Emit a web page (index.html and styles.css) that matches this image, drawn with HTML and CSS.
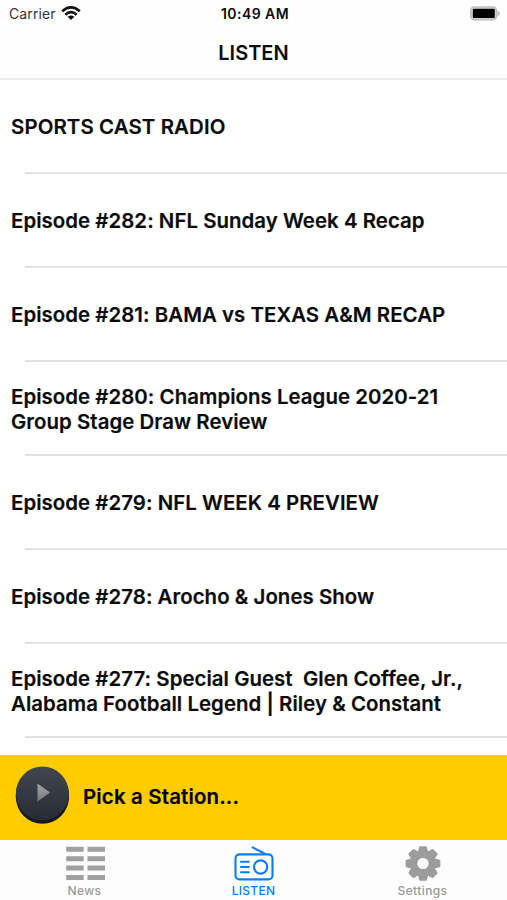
FILE: index.html
```html
<!DOCTYPE html>
<html lang="en">
<head>
<meta charset="utf-8">
<title>Listen</title>
<link rel="stylesheet" href="styles.css">
</head>
<body>
<div class="app">
  <header class="header">
    <div class="status">
      <div class="carrier"><span>Carrier</span>
        <svg class="wifi" width="20" height="15" viewBox="0 0 20 15"><g fill="none" stroke="#111" stroke-width="2.7"><path d="M1.2 5.2Q10-2.4 18.8 5.2"/><path d="M4.3 8.7Q10 3.6 15.7 8.7"/></g><path fill="#111" d="M6.7 10.8Q10 8 13.3 10.8L10 14Z"/></svg>
      </div>
      <span class="time">10:49 AM</span>
      <div class="power"><svg width="32" height="15" viewBox="0 0 32 15"><rect x="1.8" y="1" width="25.6" height="12.6" rx="3.5" fill="#ddd" stroke="#bdbdbd" stroke-width="1.6"/><rect x="3.8" y="2.8" width="22" height="9.2" rx="1" fill="#000"/><path d="M28.4 4.5v6q2.4-.8 2.4-3t-2.4-3z" fill="#bdbdbd"/></svg></div>
    </div>
    <h1 class="title">LISTEN</h1>
  </header>
  <ul class="list">
    <li class="row"><span class="caps">SPORTS CAST RADIO</span></li>
    <li class="row"><span>Episode #282: NFL Sunday Week 4 Recap</span></li>
    <li class="row"><span>Episode #281: BAMA vs TEXAS A&amp;M RECAP</span></li>
    <li class="row double"><span>Episode #280: Champions League 2020-21</span><span>Group Stage Draw Review</span></li>
    <li class="row"><span>Episode #279: NFL WEEK 4 PREVIEW</span></li>
    <li class="row"><span>Episode #278: Arocho &amp; Jones Show</span></li>
    <li class="row double"><span>Episode #277: Special Guest&nbsp; Glen Coffee, Jr.,</span><span>Alabama Football Legend | Riley &amp; Constant</span></li>
  </ul>
  <section class="player">
    <svg class="play" width="54" height="59" viewBox="0 0 54 59">
      <defs><linearGradient id="face" x1="0" y1="0" x2="0" y2="1"><stop offset="0" stop-color="#42464f"/><stop offset="1" stop-color="#262b34"/></linearGradient>
      <linearGradient id="arrow" x1="0" y1="0" x2="0" y2="1"><stop offset="0" stop-color="#a3a4a8"/><stop offset="1" stop-color="#77797e"/></linearGradient></defs>
      <ellipse cx="27.4" cy="30" rx="26.7" ry="27.8" fill="#141820"/><ellipse cx="27.4" cy="27.5" rx="26.5" ry="27" fill="url(#face)"/><path d="M22.5 17.5v18L35 26.5Z" fill="url(#arrow)"/>
    </svg>
    <span class="station">Pick a Station...</span>
  </section>
  <nav class="tabs">
    <a class="tab"><svg width="40" height="36" viewBox="0 0 40 36"><path fill="#a0a0a0" d="M1.2 1.8h17.5v5H1.2zM22.5 1.8H40v5H22.5zM1.2 11.2h17.5v5H1.2zM22.5 11.2H40v5H22.5zM1.2 20.6h17.5v5H1.2zM22.5 20.6H40v5H22.5zM1.2 30h17.5v5H1.2zM22.5 30H40v5H22.5z"/></svg><span>News</span></a>
    <a class="tab active"><svg width="40" height="36" viewBox="0 0 40 36"><g fill="none" stroke="#087df5" stroke-width="2.1"><rect x="1.5" y="9.4" width="37" height="25" rx="4"/><circle cx="26.6" cy="22" r="6.6"/><path stroke-linecap="round" d="M18.6 2.4 31.3 9M7 16.8h7.8M7 22h7.8M7 27.2h7.8"/></g></svg><span>LISTEN</span></a>
    <a class="tab"><svg width="40" height="36" viewBox="-20 -18.5 40 36"><g fill="#9c9c9c"><path id="tooth" d="M-5.5-10-3.8-16.6Q-3.6-17.3-2.9-17.3H2.9Q3.6-17.3 3.8-16.6L5.5-10Z"/><use href="#tooth" transform="rotate(45)"/><use href="#tooth" transform="rotate(90)"/><use href="#tooth" transform="rotate(135)"/><use href="#tooth" transform="rotate(180)"/><use href="#tooth" transform="rotate(225)"/><use href="#tooth" transform="rotate(270)"/><use href="#tooth" transform="rotate(315)"/></g><circle r="9" fill="none" stroke="#9c9c9c" stroke-width="7.4"/><circle r="5.6" fill="#fdfdfd"/></svg><span>Settings</span></a>
  </nav>
</div>
</body>
</html>
```

FILE: styles.css
```css
* { box-sizing: border-box; }
body { margin: 0; background: #fff; color: #0b0b0b; font-family: Inter, "Liberation Sans", sans-serif; }
.app { width: 507px; height: 900px; display: flex; flex-direction: column; overflow: hidden; }
.header { height: 80px; flex: none; border-bottom: 2px solid #ececec; background: #fefefe; }
.status { height: 27px; padding: 0 6px 0 9px; display: grid; grid-template-columns: 1fr auto 1fr; align-items: center; font-size: 14px; }
.carrier { display: flex; align-items: center; gap: 5px; color: #333; letter-spacing: .1px; }
.time { font-weight: 600; letter-spacing: .45px; }
.power { display: flex; justify-content: flex-end; }
.title { margin: 0; font-size: 20px; line-height: 52px; font-weight: 600; text-align: center; }
.list { margin: 0; padding: 0; list-style: none; height: 675px; flex: none; }
.row { height: 94px; padding: 0 0 2px 11px; display: flex; flex-direction: column; justify-content: center; align-items: flex-start; font-size: 20.4px; line-height: 25px; font-weight: 600; letter-spacing: .05px; -webkit-text-stroke: .2px; white-space: nowrap; background: linear-gradient(#e2e2e2, #e2e2e2) 25px 92px / 100% 2px no-repeat; }
.caps { letter-spacing: .12px; }
.double { padding-bottom: 0; }
.player { height: 85px; flex: none; background: #fc0; display: flex; align-items: center; padding-left: 15px; gap: 14px; }
.play { margin-top: -5px; }
.station { margin-top: -2px; font-size: 20.4px; letter-spacing: .18px; font-weight: 600; color: #000; -webkit-text-stroke: .2px; }
.tabs { height: 60px; flex: none; display: grid; grid-template-columns: repeat(3, 1fr); background: #fdfdfd; }
.tab { display: flex; flex-direction: column; align-items: center; padding-top: 5px; font-size: 12px; line-height: 20px; font-weight: 500; color: #999; letter-spacing: .4px; }
.tab svg { display: block; }
.active { color: #087df5; letter-spacing: .25px; }
```
